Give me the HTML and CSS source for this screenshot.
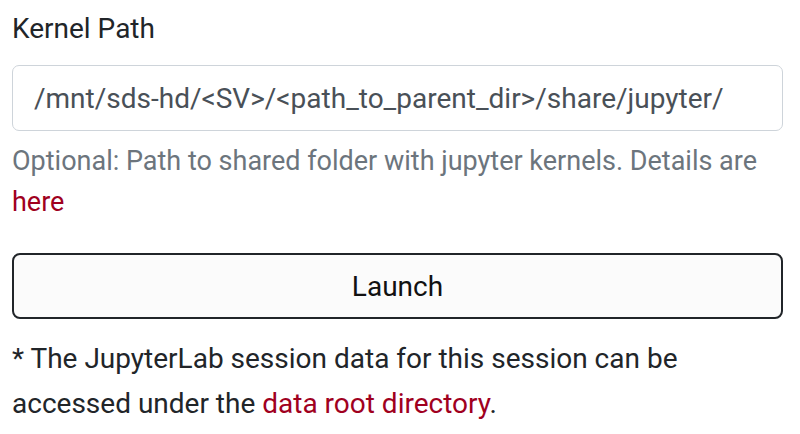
FILE: index.html
```html
<!DOCTYPE html>
<html>
<head>
<meta charset="utf-8">
<link rel="stylesheet" href="styles.css">
</head>
<body>
<div class="form">
  <label class="label" for="kp">Kernel Path</label>
  <input id="kp" class="input" type="text" value="/mnt/sds-hd/&lt;SV&gt;/&lt;path_to_parent_dir&gt;/share/jupyter/">
  <p class="help">Optional: Path to shared folder with jupyter kernels. Details are <a href="#">here</a></p>
  <button class="btn" type="button">Launch</button>
  <p class="note">* The JupyterLab session data for this session can be accessed under the <a href="#">data root directory</a>.</p>
</div>
</body>
</html>
```
FILE: styles.css
```css
html, body {
  margin: 0;
  padding: 0;
  background: #fff;
}
body {
  font-family: Roboto, "Liberation Sans", sans-serif;
  color: #212529;
}
.form {
  display: flex;
  flex-direction: column;
  padding: 0 17px 0 12px;
}
.label {
  font-size: 28px;
  line-height: 42px;
  margin-top: 8px;
  color: #212529;
}
.input {
  margin-top: 15px;
  height: 66px;
  box-sizing: border-box;
  border: 1.5px solid #ced4da;
  border-radius: 7px;
  padding: 0 21px;
  font-family: Roboto, "Liberation Sans", sans-serif;
  font-size: 28px;
  color: #495057;
  background: #fff;
  outline: none;
}
.help {
  margin: 9.5px 0 0;
  font-size: 27px;
  line-height: 41px;
  color: #6c757d;
}
.help a, .note a {
  color: #a0001e;
  text-decoration: none;
}
.btn {
  margin-top: 30.5px;
  height: 66px;
  box-sizing: border-box;
  border: 2px solid #212529;
  border-radius: 8px;
  background: #fbfbfb;
  font-family: Roboto, "Liberation Sans", sans-serif;
  font-size: 28px;
  color: #111;
}
.note {
  margin: 16.5px 0 0;
  font-size: 28px;
  line-height: 45px;
  color: #212529;
}
```
